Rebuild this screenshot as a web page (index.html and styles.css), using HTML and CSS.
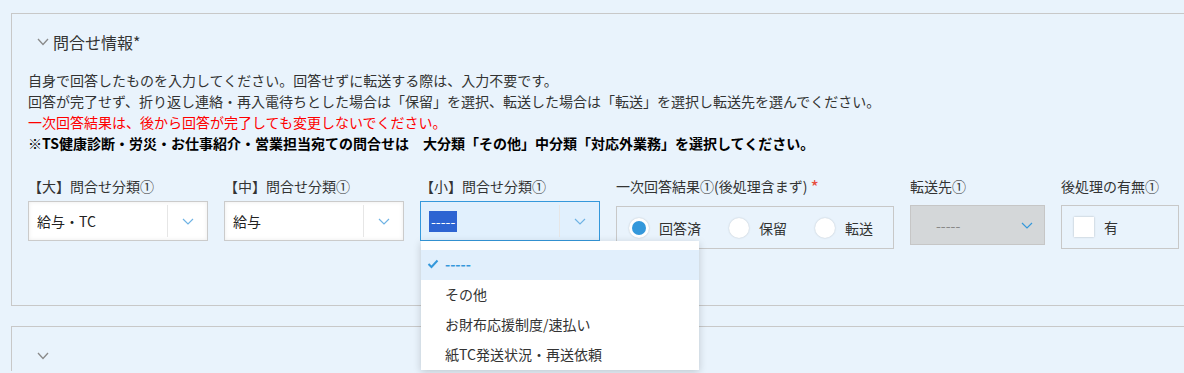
FILE: index.html
```html
<!DOCTYPE html>
<html lang="ja">
<head>
  <meta charset="UTF-8" />
  <title>問合せ情報</title>
  <link rel="stylesheet" href="styles.css">
</head>
<body>

<div class="page">
  <section class="panel">
    <div class="panel-head">
      <svg class="fold" width="12" height="8" viewBox="0 0 12 8"><polyline points="1,1 6,6.5 11,1" fill="none" stroke="#8a8a8a" stroke-width="1.3"/></svg>
      <span class="panel-title">問合せ情報*</span>
    </div>

    <div class="notes">
      <p>自身で回答したものを入力してください。回答せずに転送する際は、入力不要です。</p>
      <p>回答が完了せず、折り返し連絡・再入電待ちとした場合は「保留」を選択、転送した場合は「転送」を選択し転送先を選んでください。</p>
      <p class="warn">一次回答結果は、後から回答が完了しても変更しないでください。</p>
      <p class="strong">※TS健康診断・労災・お仕事紹介・営業担当宛ての問合せは　大分類「その他」中分類「対応外業務」を選択してください。</p>
    </div>

    <div class="fields">
      <div class="field">
        <div class="label">【大】問合せ分類①</div>
        <div class="select">
          <span class="value">給与・TC</span>
          <span class="arrow"><svg width="12" height="7" viewBox="0 0 12 7"><polyline points="1,1 6,6 11,1" fill="none" stroke="#6fb3e4" stroke-width="1.2"/></svg></span>
        </div>
      </div>

      <div class="field">
        <div class="label">【中】問合せ分類①</div>
        <div class="select">
          <span class="value">給与</span>
          <span class="arrow"><svg width="12" height="7" viewBox="0 0 12 7"><polyline points="1,1 6,6 11,1" fill="none" stroke="#6fb3e4" stroke-width="1.2"/></svg></span>
        </div>
      </div>

      <div class="field field-open">
        <div class="label">【小】問合せ分類①</div>
        <div class="select select-focus">
          <span class="value"><span class="picked">-----</span></span>
          <span class="arrow"><svg width="12" height="7" viewBox="0 0 12 7"><polyline points="1,1 6,6 11,1" fill="none" stroke="#6fb3e4" stroke-width="1.2"/></svg></span>
        </div>
        <ul class="menu">
          <li class="current">
            <svg class="tick" width="12" height="10" viewBox="0 0 12 10"><polyline points="1.5,5 4.5,8 10.5,1.5" fill="none" stroke="#3498db" stroke-width="2"/></svg>
            <span>-----</span>
          </li>
          <li><span>その他</span></li>
          <li><span>お財布応援制度/速払い</span></li>
          <li><span>紙TC発送状況・再送依頼</span></li>
        </ul>
      </div>

      <div class="field field-radio">
        <div class="label">一次回答結果①(後処理含まず) <span class="req">*</span></div>
        <div class="radios">
          <label class="radio"><span class="dot checked"></span>回答済</label>
          <label class="radio"><span class="dot"></span>保留</label>
          <label class="radio"><span class="dot"></span>転送</label>
        </div>
      </div>

      <div class="field field-dest">
        <div class="label">転送先①</div>
        <div class="select select-disabled">
          <span class="value">-----</span>
          <span class="arrow"><svg width="12" height="7" viewBox="0 0 12 7"><polyline points="1,1 6,6 11,1" fill="none" stroke="#3498db" stroke-width="1.2"/></svg></span>
        </div>
      </div>

      <div class="field field-check">
        <div class="label">後処理の有無①</div>
        <div class="checks">
          <label class="check"><span class="box"></span>有</label>
        </div>
      </div>
    </div>
  </section>

  <section class="panel panel-closed">
    <div class="panel-head">
      <svg class="fold" width="12" height="8" viewBox="0 0 12 8"><polyline points="1,1 6,6.5 11,1" fill="none" stroke="#8a8a8a" stroke-width="1.3"/></svg>
    </div>
  </section>
</div>

</body>
</html>
```

FILE: styles.css
```css
* {
  margin: 0;
  padding: 0;
  box-sizing: border-box;
}

html,
body {
  height: 373px;
  overflow: hidden;
}

body {
  font-family: "Noto Sans CJK JP", "Noto Sans", sans-serif;
  background-color: #e9f3fc;
  color: #333;
}

.page {
  padding: 13px 0 0 11px;
}

.panel {
  border: 1px solid #c8c8c8;
  border-right: none;
  padding: 0 0 56px 16px;
  position: relative;
}

.panel-head {
  display: flex;
  align-items: center;
  gap: 4px;
  height: 22px;
  margin-top: 17px;
  padding-left: 9px;
}

.panel-title {
  font-size: 16px;
  line-height: 22px;
  color: #333;
}

.fold {
  display: block;
}

.notes {
  margin-top: 17px;
  font-size: 14px;
  line-height: 21px;
}

.notes .warn {
  color: #f00;
}

.notes .strong {
  color: #000;
  font-weight: bold;
}

.fields {
  display: flex;
  align-items: flex-start;
  gap: 16px;
  margin-top: 22px;
}

.field {
  flex-shrink: 0;
  width: 180px;
  position: relative;
}

.label {
  font-size: 14px;
  line-height: 21px;
  color: #333;
  white-space: nowrap;
}

.req {
  color: #e74c3c;
  font-size: 18px;
  line-height: 14px;
  vertical-align: -2px;
}

.select {
  display: flex;
  height: 40px;
  margin-top: 4px;
  background-color: #fff;
  border: 1px solid #cbcbcb;
  box-shadow: inset 0 0 4px rgba(0, 0, 0, 0.08);
}

.select .value {
  flex: 1;
  display: flex;
  align-items: center;
  padding-left: 8px;
  font-size: 14px;
  color: #222;
}

.select .arrow {
  width: 40px;
  display: flex;
  align-items: center;
  justify-content: center;
  border-left: 1px solid #e6e6e6;
  margin: 3px 0;
}

.select-focus {
  background-color: #e1f0fd;
  border-color: #3498db;
  box-shadow: none;
}

.picked {
  background-color: #2d64d2;
  color: #fff;
  padding: 0 2px;
  line-height: 21px;
  margin-top: 1px;
}

.menu {
  position: absolute;
  top: 65px;
  left: 1px;
  width: 278px;
  list-style: none;
  background-color: #fff;
  padding-top: 9px;
  box-shadow: 0 2px 8px rgba(0, 0, 0, 0.18);
  z-index: 10;
}

.menu li {
  display: flex;
  align-items: center;
  height: 30px;
  padding-left: 24px;
  padding-bottom: 2px;
  font-size: 14px;
  color: #333;
  position: relative;
}

.menu li.current {
  background-color: #e1effc;
  color: #3498db;
  font-weight: bold;
}

.menu .tick {
  position: absolute;
  left: 6px;
  top: 9px;
}

.field-radio {
  width: 278px;
}

.radios {
  display: flex;
  align-items: center;
  gap: 28px;
  height: 43px;
  margin-top: 9px;
  padding-left: 12px;
  border: 1px solid #c8c8c8;
}

.radio,
.check {
  display: flex;
  align-items: center;
  gap: 10px;
  font-size: 14px;
  color: #333;
}

.dot {
  width: 20px;
  height: 20px;
  border-radius: 50%;
  background-color: #fff;
  box-shadow: 0 0 2px rgba(0, 0, 0, 0.2);
  position: relative;
}

.dot.checked::after {
  content: "";
  position: absolute;
  left: 3px;
  top: 3px;
  width: 14px;
  height: 14px;
  border-radius: 50%;
  background-color: #3498db;
}

.field-dest {
  width: 135px;
}

.select-disabled {
  margin-top: 8px;
  background-color: #d4d7d9;
  border-color: #c6c6c6;
  box-shadow: none;
}

.select-disabled .value {
  padding-left: 25px;
  color: #888;
}

.select-disabled .arrow {
  border-left: none;
  width: 34px;
}

.field-check {
  width: 118px;
}

.checks {
  display: flex;
  align-items: center;
  height: 44px;
  margin-top: 8px;
  padding-left: 12px;
  border: 1px solid #c8c8c8;
}

.box {
  width: 20px;
  height: 20px;
  background-color: #fff;
  box-shadow: 0 0 2px rgba(0, 0, 0, 0.25);
}

.panel-closed {
  margin-top: 20px;
  padding-bottom: 4px;
  border-bottom: none;
}

.panel-closed .panel-head {
  margin-top: 18px;
}
```
